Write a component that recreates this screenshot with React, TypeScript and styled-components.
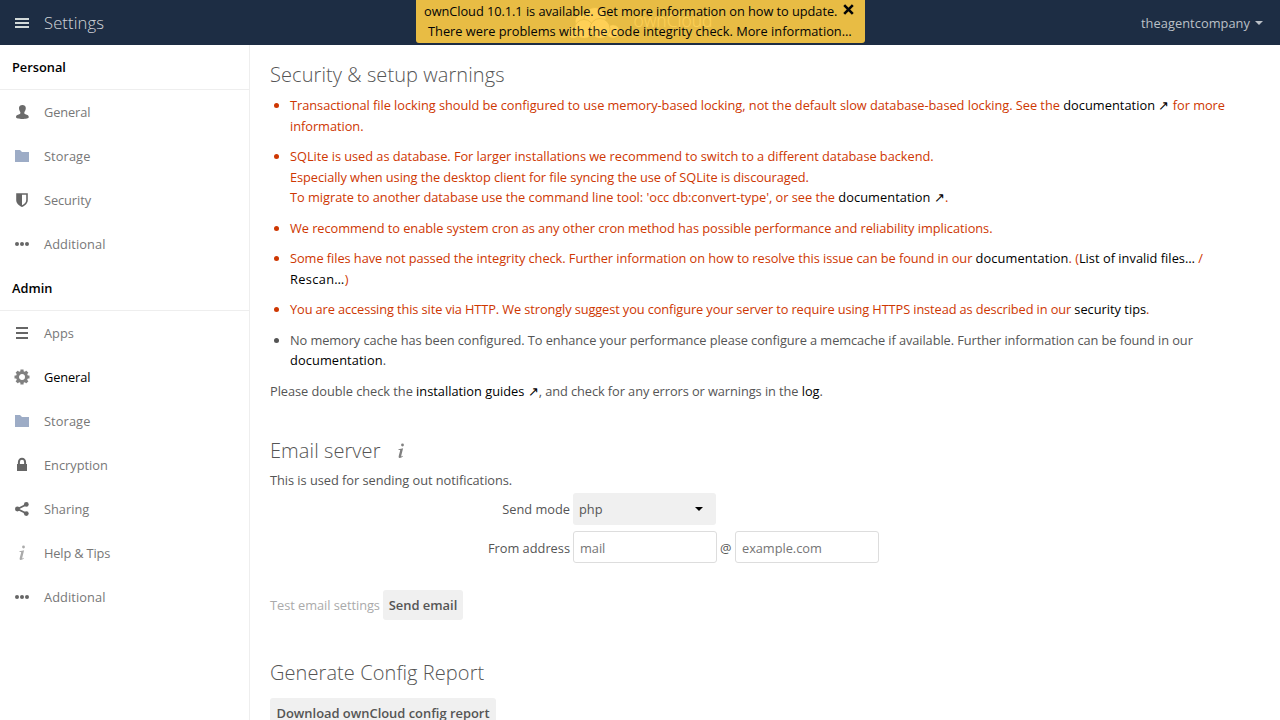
import React from 'react';
import styled, { createGlobalStyle, css } from 'styled-components';

const GlobalStyle = createGlobalStyle`
  * { box-sizing: border-box; }
  html, body { margin: 0; padding: 0; }
  body {
    height: 720px;
    overflow: hidden;
    background: #fff;
    color: #555;
    font-family: "Open Sans", "Liberation Sans", sans-serif;
    font-size: 12.8px;
    line-height: 20.48px;
  }
`;

const Page = styled.div`
  display: flex;
  flex-direction: column;
  height: 720px;
  overflow: hidden;
  position: relative;
`;

const Header = styled.header`
  flex: none;
  display: grid;
  grid-template-columns: 1fr auto 1fr;
  align-items: center;
  height: 45px;
  background: #1d2d44;
`;

const AppMenu = styled.div`
  display: flex;
  align-items: center;
  gap: 14px;
  padding-left: 14px;
`;

const AppTitle = styled.h1`
  margin: 0;
  font-size: 16.6px;
  font-weight: 300;
  line-height: 24px;
  letter-spacing: 0.1px;
  color: rgba(255, 255, 255, 0.8);
`;

const Brand = styled.div`
  display: flex;
  align-items: center;
  gap: 13px;
  height: 45px;
  color: #fff;
`;

const BrandName = styled.span`
  padding-bottom: 5px;
  font-size: 17.5px;
  font-weight: 300;
  line-height: 24px;
`;

const UserMenu = styled.div`
  display: flex;
  align-items: center;
  justify-content: flex-end;
  gap: 5px;
  padding-right: 17px;
  padding-top: 1px;
  letter-spacing: 0.06px;
  color: #bbc0c7;
`;

const Caret = styled.span<{ $color: string }>`
  border: 4px solid transparent;
  border-top-color: ${(p) => p.$color};
  border-bottom: 0;
`;

const Toast = styled.div`
  position: absolute;
  z-index: 5;
  top: 0;
  left: 416px;
  width: 449px;
  height: 43px;
  padding: 1px 8px 0;
  border-radius: 0 0 3px 3px;
  background: #fc4;
  color: #000;
  opacity: 0.9;
`;

const ToastRow = styled.div<{ $indent?: number }>`
  display: flex;
  gap: 6px;
  height: 20px;
  padding-left: ${(p) => p.$indent ?? 0}px;
  white-space: nowrap;
`;

const ToastClose = styled.span`
  display: flex;
  padding-top: 3px;
`;

const Body = styled.div`
  flex: 1;
  display: flex;
  min-height: 0;
`;

const Sidebar = styled.nav`
  flex: none;
  width: 250px;
  border-right: 1px solid #eee;
`;

const GroupTitle = styled.div`
  height: 45px;
  padding-left: 12px;
  border-bottom: 1px solid #eee;
  line-height: 44px;
  font-weight: 600;
  color: #000;
`;

const NavItem = styled.a<{ $active?: boolean }>`
  display: flex;
  align-items: center;
  gap: 14px;
  height: 44px;
  padding-left: 14px;
  color: ${(p) => (p.$active ? '#000' : '#777')};
`;

const Main = styled.main`
  flex: 1;
  min-width: 0;
  overflow: hidden;
  padding: 20px 20px 0;
`;

const Section = styled.section<{ $gap: number }>`
  margin-bottom: ${(p) => p.$gap}px;
`;

const Heading = styled.h2<{ $space: number }>`
  display: flex;
  align-items: center;
  gap: 12px;
  margin: 0 0 ${(p) => p.$space}px;
  font-size: 20px;
  font-weight: 300;
  line-height: 20.48px;
  letter-spacing: 0.08px;
  color: #555;
`;

const WarningList = styled.ul`
  margin: 0;
  padding: 0 0 0 20px;
`;

const Warning = styled.li<{ $minor?: boolean }>`
  padding-bottom: 10px;
  ${(p) =>
    !p.$minor &&
    css`
      color: #ce3702;
    `}
`;

const Track = styled.span<{ $by: number }>`
  letter-spacing: ${(p) => p.$by}px;
`;

const DocLink = styled.a<{ $by?: number }>`
  color: #000;
  letter-spacing: ${(p) => p.$by ?? 0}px;
`;

const Text = styled.p`
  margin: 0;
`;

const FormRow = styled.div<{ $top: number }>`
  display: flex;
  align-items: center;
  gap: 3px;
  margin-top: ${(p) => p.$top}px;
  height: 32px;
`;

const Label = styled.label<{ $drop?: number }>`
  width: 300px;
  padding-top: ${(p) => p.$drop ?? 0}px;
  text-align: right;
`;

const At = styled.span`
  width: 12px;
  padding-top: 2px;
`;

const Select = styled.div`
  display: flex;
  align-items: center;
  justify-content: space-between;
  width: 143px;
  height: 32px;
  padding: 0 13px 0 6px;
  border-radius: 3px;
  background: #f0f0f0;
`;

const Input = styled.input`
  width: 144px;
  height: 32px;
  margin: 0;
  padding: 2px 6px 0;
  border: 1px solid #ddd;
  border-radius: 3px;
  background: #fff;
  font: inherit;
  letter-spacing: -0.04px;
  &::placeholder { color: #757575; opacity: 1; }
`;

const TestRow = styled.div`
  display: flex;
  align-items: center;
  gap: 3px;
  margin-top: 27px;
`;

const Hint = styled.em`
  width: 110px;
  font-style: normal;
  letter-spacing: -0.04px;
  white-space: nowrap;
  color: #aaa;
`;

const Button = styled.button<{ $width: number }>`
  width: ${(p) => p.$width}px;
  height: 30px;
  margin: 0;
  padding: 0;
  border: 0;
  border-radius: 3px;
  background: #f0f0f0;
  color: #555;
  font: inherit;
  font-size: 12.95px;
  font-weight: 600;
  letter-spacing: -0.02px;
`;

type IconName =
  | 'menu' | 'user' | 'folder' | 'shield' | 'more' | 'list'
  | 'gear' | 'lock' | 'share' | 'info';

const teeth = [0, 45, 90, 135, 180, 225, 270, 315];

const shapes: Record<IconName, React.ReactNode> = {
  menu: <path fill="#d2d9d9" d="M1 3h14v2H1zM1 7h14v2H1zM1 11h14v2H1z" />,
  user: (
    <path
      fill="#6b6b6b"
      d="M8.400 1C6.500 1 5 2.100 5 4c0 1.700.6 3 1.300 3.900.2.900.1 1.700-.5 2C4.500 10.500 2 10.800 2 13.100 2 14.500 5 15 8.400 15s6.400-.5 6.400-1.900c0-2.300-2.500-2.600-3.900-3.200-.6-.3-.7-1.100-.5-2C11.100 7 11.800 5.700 11.800 4c0-1.900-1.500-3-3.400-3z"
    />
  ),
  folder: <path fill="#9dacc6" d="M1 2h5l2 2h7v10H1z" />,
  shield: (
    <>
      <path fill="#666" d="M2.200 1.200h11.600V8c0 3.300-2.600 5.700-5.800 7C4.800 13.700 2.200 11.300 2.200 8z" />
      <path fill="#fff" d="M8 2.800h4.200V8c0 2.300-1.700 4.100-4.200 5.200z" />
    </>
  ),
  more: (
    <g fill="#666">
      <circle cx="3" cy="8" r="2" />
      <circle cx="8" cy="8" r="2" />
      <circle cx="13" cy="8" r="2" />
    </g>
  ),
  list: <path fill="#666" d="M2 2h12v2H2zM2 7h12v2H2zM2 12h12v2H2z" />,
  gear: (
    <g fill="#808080">
      {teeth.map((a) => (
        <rect key={a} x="6.400" y="0.500" width="3.200" height="4" rx="0.300" transform={`rotate(${a} 8 8)`} />
      ))}
      <circle cx="8" cy="8" r="4.500" fill="none" stroke="#808080" strokeWidth="3" />
    </g>
  ),
  lock: (
    <>
      <path fill="none" stroke="#666" strokeWidth="2" d="M4.900 8V5.200a3.100 3.400 0 0 1 6.200 0V8" />
      <path fill="#666" d="M3 7h10v7H3z" />
    </>
  ),
  share: (
    <>
      <path fill="none" stroke="#666" strokeWidth="1.800" d="M12.500 3.500L3.500 8l9 4.500" />
      <g fill="#666">
        <circle cx="12.300" cy="3.400" r="2.400" />
        <circle cx="3.400" cy="8" r="2.400" />
        <circle cx="12.300" cy="12.600" r="2.400" />
      </g>
    </>
  ),
  info: (
    <g fill="currentColor">
      <circle cx="9.500" cy="2" r="1.400" />
      <path d="M10.100 5.200L8.300 12.500c-.2.900.1 1.100.5.900l1-.6.200.5c-1.300 1.200-2.500 1.900-3.500 1.700-.9-.2-1-1-.7-2.200l1.300-5c.2-.9-.1-1.100-1.700-.7l-.1-.6C7.200 5.700 9 5.300 10.100 5.200z" />
    </g>
  ),
};

const Glyph = styled.svg<{ $color?: string }>`
  flex: none;
  display: block;
  width: 16px;
  height: 16px;
  color: ${(p) => p.$color ?? '#aaa'};
`;

const Icon = ({ name, color }: { name: IconName; color?: string }) => (
  <Glyph viewBox="0 0 16 16" $color={color} aria-hidden="true">
    {shapes[name]}
  </Glyph>
);

const CloudLogo = () => (
  <svg width="53" height="32" viewBox="0 0 53 32" fill="#fff" stroke="#1d2d44" strokeWidth="0.8" aria-hidden="true">
    <circle cx="15" cy="14" r="7" />
    <circle cx="28" cy="11.500" r="11" />
    <circle cx="6.500" cy="25.500" r="6" />
    <circle cx="46" cy="24.500" r="6.800" />
    <circle cx="17" cy="22" r="9.500" />
    <circle cx="33" cy="21.500" r="10" />
  </svg>
);

type Item = { icon: IconName; label: string; active?: boolean; by?: number };

const groups: { title: string; items: Item[] }[] = [
  {
    title: 'Personal',
    items: [
      { icon: 'user', label: 'General', by: -0.12 },
      { icon: 'folder', label: 'Storage', by: 0.1 },
      { icon: 'shield', label: 'Security', by: -0.08 },
      { icon: 'more', label: 'Additional', by: 0.08 },
    ],
  },
  {
    title: 'Admin',
    items: [
      { icon: 'list', label: 'Apps' },
      { icon: 'gear', label: 'General', active: true, by: -0.12 },
      { icon: 'folder', label: 'Storage', by: 0.1 },
      { icon: 'lock', label: 'Encryption' },
      { icon: 'share', label: 'Sharing' },
      { icon: 'info', label: 'Help & Tips', by: -0.15 },
      { icon: 'more', label: 'Additional', by: 0.08 },
    ],
  },
];

export default function App() {
  return (
    <Page>
      <GlobalStyle />
      <Header>
        <AppMenu>
          <Icon name="menu" />
          <AppTitle>Settings</AppTitle>
        </AppMenu>
        <Brand>
          <CloudLogo />
          <BrandName>ownCloud</BrandName>
        </Brand>
        <UserMenu>
          theagentcompany
          <Caret $color="#bbc0c7" />
        </UserMenu>
      </Header>
      <Toast>
        <ToastRow>
          <Track $by={-0.055}>ownCloud 10.1.1 is available. Get more information on how to update.</Track>
          <ToastClose>
            <svg width="11" height="11" viewBox="0 0 11 11" aria-hidden="true">
              <path d="M1.200 1.200l8.600 8.600M9.800 1.200l-8.600 8.600" stroke="#000" strokeWidth="2.600" />
            </svg>
          </ToastClose>
        </ToastRow>
        <ToastRow $indent={4}>There were problems with the code integrity check. More information…</ToastRow>
      </Toast>
      <Body>
        <Sidebar>
          {groups.map((group) => (
            <div key={group.title}>
              <GroupTitle>{group.title}</GroupTitle>
              {group.items.map((item) => (
                <NavItem key={item.label} $active={item.active}>
                  <Icon name={item.icon} />
                  <Track $by={item.by ?? 0}>{item.label}</Track>
                </NavItem>
              ))}
            </div>
          ))}
        </Sidebar>
        <Main>
          <Section $gap={39.7}>
            <Heading $space={9.8}>Security &amp; setup warnings</Heading>
            <WarningList>
              <Warning>
                <Track $by={-0.041}>
                  Transactional file locking should be configured to use memory-based locking, not the default slow
                  database-based locking. See the <DocLink $by={0.04}>documentation ↗</DocLink> for more information.
                </Track>
              </Warning>
              <Warning>
                <Track $by={-0.038}>
                  SQLite is used as database. For larger installations we recommend to switch to a different database
                  backend.
                </Track>
                <br />
                <Track $by={-0.073}>
                  Especially when using the desktop client for file syncing the use of SQLite is discouraged.
                </Track>
                <br />
                <Track $by={-0.023}>
                  To migrate to another database use the command line tool: 'occ db:convert-type', or see the{' '}
                  <DocLink $by={0.06}>documentation ↗</DocLink>.
                </Track>
              </Warning>
              <Warning>
                <Track $by={-0.051}>
                  We recommend to enable system cron as any other cron method has possible performance and reliability
                  implications.
                </Track>
              </Warning>
              <Warning>
                <Track $by={-0.052}>
                  Some files have not passed the integrity check. Further information on how to resolve this issue can
                  be found in our <DocLink $by={0.12}>documentation</DocLink>. (
                  <DocLink $by={0.03}>List of invalid files…</DocLink> / <DocLink $by={0.35}>Rescan…</DocLink>)
                </Track>
              </Warning>
              <Warning>
                <Track $by={-0.108}>
                  You are accessing this site via HTTP. We strongly suggest you configure your server to require using
                  HTTPS instead as described in our <DocLink>security tips</DocLink>.
                </Track>
              </Warning>
              <Warning $minor>
                <Track $by={-0.076}>
                  No memory cache has been configured. To enhance your performance please configure a memcache if
                  available. Further information can be found in our <DocLink $by={0.1}>documentation</DocLink>.
                </Track>
              </Warning>
            </WarningList>
            <Text>
              <Track $by={-0.04}>Please double check the </Track>
              <DocLink>installation guides ↗</DocLink>
              <Track $by={-0.075}>, and check for any errors or warnings in the </Track>
              <DocLink>log</DocLink>.
            </Text>
          </Section>
          <Section $gap={43}>
            <Heading $space={9}>
              Email server
              <Icon name="info" color="#808080" />
            </Heading>
            <Text>
              <Track $by={-0.035}>This is used for sending out notifications.</Track>
            </Text>
            <FormRow $top={2}>
              <Label>Send mode</Label>
              <Select>
                php
                <Caret $color="#000" />
              </Select>
            </FormRow>
            <FormRow $top={6}>
              <Label $drop={2}>From address</Label>
              <Input placeholder="mail" />
              <At>@</At>
              <Input placeholder="example.com" />
            </FormRow>
            <TestRow>
              <Hint>Test email settings</Hint>
              <Button $width={80}>Send email</Button>
            </TestRow>
          </Section>
          <Section $gap={0}>
            <Heading $space={14.8}>Generate Config Report</Heading>
            <Button $width={226}>Download ownCloud config report</Button>
          </Section>
        </Main>
      </Body>
    </Page>
  );
}
